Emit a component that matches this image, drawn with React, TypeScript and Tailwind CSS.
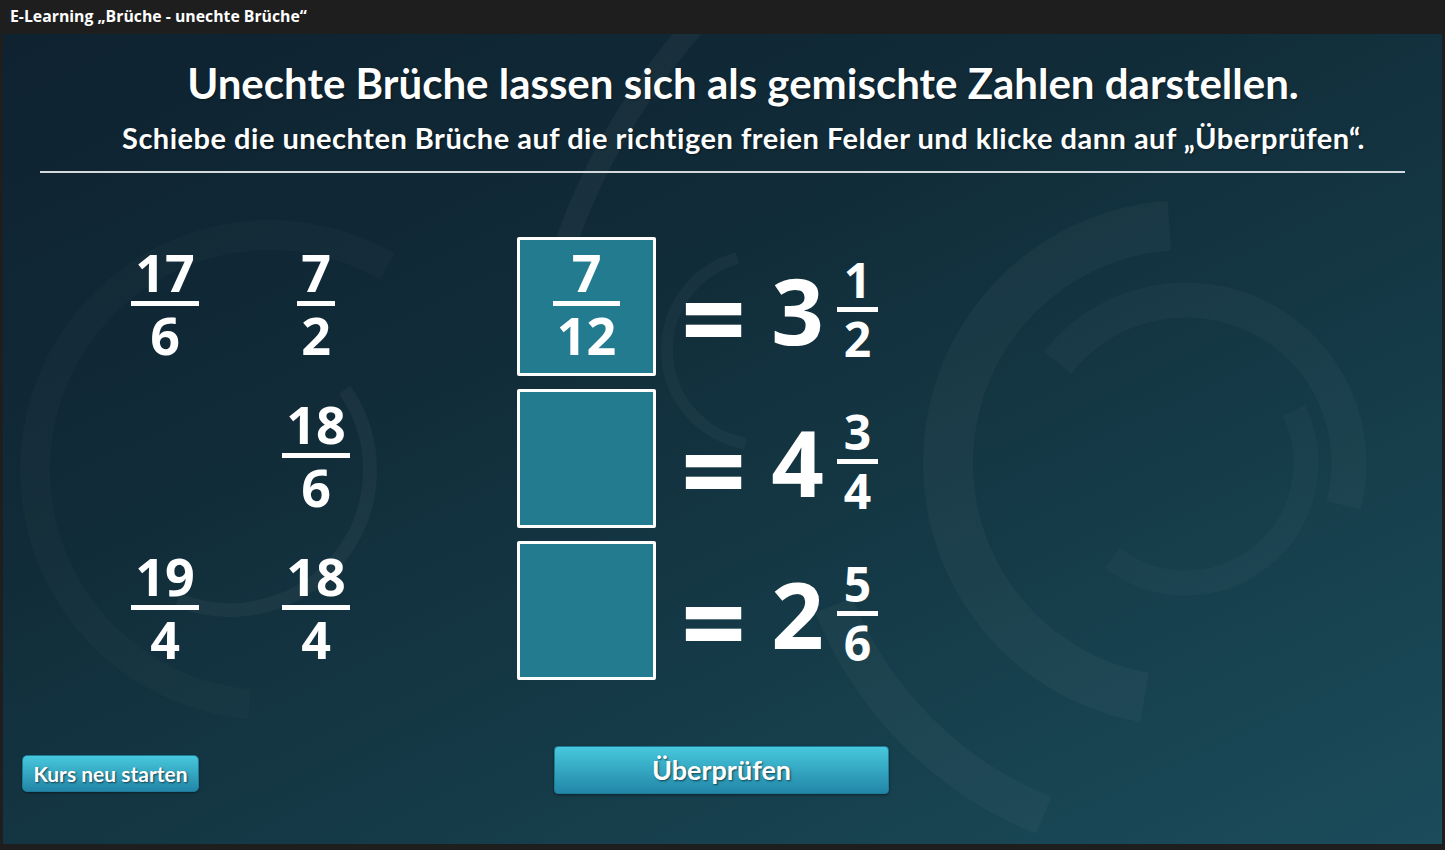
import React from "react";

// Dekorative Kreisbögen im Hintergrund
const arc = (cx: number, cy: number, r: number, a0: number, a1: number) => {
  const rad = (a: number) => (a * Math.PI) / 180;
  const x0 = cx + r * Math.cos(rad(a0));
  const y0 = cy + r * Math.sin(rad(a0));
  const x1 = cx + r * Math.cos(rad(a1));
  const y1 = cy + r * Math.sin(rad(a1));
  const large = a1 - a0 > 180 ? 1 : 0;
  return `M ${x0} ${y0} A ${r} ${r} 0 ${large} 1 ${x1} ${y1}`;
};

const bogen = [
  { cx: 1183, cy: 429, r: 238, w: 50, a0: 100, a1: 266, o: 0.032 },
  { cx: 1183, cy: 429, r: 163, w: 35, a0: 218, a1: 375, o: 0.028 },
  { cx: 1183, cy: 429, r: 120, w: 25, a0: -26, a1: 128, o: 0.025 },
  { cx: 1183, cy: 429, r: 658, w: 22, a0: 192, a1: 232, o: 0.04 },
  { cx: 1183, cy: 429, r: 380, w: 40, a0: 112, a1: 158, o: 0.03 },
  { cx: 267, cy: 436, r: 235, w: 30, a0: 95, a1: 300, o: 0.018 },
  { cx: 227, cy: 436, r: 140, w: 14, a0: -35, a1: 112, o: 0.04 },
  { cx: 759, cy: 316, r: 95, w: 12, a0: 100, a1: 255, o: 0.03 },
];

const Hintergrund = () => (
  <svg className="absolute inset-0" width="1439" height="810" viewBox="0 0 1439 810">
    {bogen.map((b, i) => (
      <path
        key={i}
        d={arc(b.cx, b.cy, b.r, b.a0, b.a1)}
        fill="none"
        stroke="#ffffff"
        strokeOpacity={b.o}
        strokeWidth={b.w}
      />
    ))}
  </svg>
);

const Bruch = ({ z, n }: { z: string; n: string }) => (
  <div className="mb-[7px] inline-flex flex-col items-stretch font-['Open_Sans',sans-serif] font-bold text-white text-[52px] leading-[54px]">
    <span className="px-[4px] text-center">{z}</span>
    <span className="my-[2px] h-[5px] bg-white" />
    <span className="px-[4px] text-center">{n}</span>
  </div>
);

const KleinBruch = ({ z, n }: { z: string; n: string }) => (
  <div className="inline-flex flex-col items-stretch font-['Open_Sans',sans-serif] font-bold text-white text-[48px] leading-[50px]">
    <span className="px-[7px] text-center">{z}</span>
    <span className="my-[2px] h-[5px] bg-white" />
    <span className="px-[7px] text-center">{n}</span>
  </div>
);

const links = [
  { z: "17", n: "6", pos: "col-start-1 row-start-1" },
  { z: "7", n: "2", pos: "col-start-2 row-start-1" },
  { z: "18", n: "6", pos: "col-start-2 row-start-2" },
  { z: "19", n: "4", pos: "col-start-1 row-start-3" },
  { z: "18", n: "4", pos: "col-start-2 row-start-3" },
];

const zeilen = [
  { ganz: "3", z: "1", n: "2", feld: { z: "7", n: "12" } },
  { ganz: "4", z: "3", n: "4", feld: null },
  { ganz: "2", z: "5", n: "6", feld: null },
];

const App = () => {
  return (
    <div className="w-[1445px] h-[850px] bg-[#1e1e1e] flex flex-col overflow-hidden">
      <div className="h-[34px] flex items-center pl-[10px] font-['Open_Sans',sans-serif] font-bold text-[15.8px] text-white">
        E-Learning „Brüche - unechte Brüche“
      </div>

      <div className="relative mx-[3px] h-[810px] overflow-hidden bg-[linear-gradient(155deg,#0e2230_0%,#112b38_35%,#153a47_65%,#1b4c5b_100%)]">
        <Hintergrund />

        <div className="relative flex h-full flex-col">
          {/* Überschriften */}
          <h1 className="pt-[24px] pl-[41px] text-center font-['Lato',sans-serif] font-bold text-[42px] leading-[50px] text-white [text-shadow:1px_1px_2px_rgba(0,0,0,0.4)]">
            Unechte Brüche lassen sich als gemischte Zahlen darstellen.
          </h1>
          <p className="mt-[13px] pl-[42px] text-center font-['Lato',sans-serif] font-bold text-[29px] tracking-[0.5px] leading-[34px] text-white [text-shadow:1px_1px_2px_rgba(0,0,0,0.4)]">
            Schiebe die unechten Brüche auf die richtigen freien Felder und klicke dann auf „Überprüfen“.
          </p>
          <div className="mx-[37px] mt-[16px] h-[2px] bg-[#d3d9dc]" />

          {/* Aufgabe */}
          <div className="mt-[64px] flex">
            <div className="ml-[102px] grid grid-cols-[120px_120px] grid-rows-[139px_139px_139px] gap-x-[31px] gap-y-[13px]">
              {links.map((b, i) => (
                <div key={i} className={`${b.pos} flex items-center justify-center`}>
                  <Bruch z={b.z} n={b.n} />
                </div>
              ))}
            </div>

            <div className="ml-[141px] flex flex-col gap-[13px]">
              {zeilen.map((r, i) => (
                <div key={i} className="flex h-[139px] items-center">
                  <div className="flex h-[139px] w-[139px] items-center justify-center rounded-[2px] border-[3px] border-white bg-[#237b8f]">
                    {r.feld && <Bruch z={r.feld.z} n={r.feld.n} />}
                  </div>
                  <span className="ml-[25px] mt-[18px] font-['Open_Sans',sans-serif] font-bold text-[114px] leading-[100px] text-white">
                    =
                  </span>
                  <span className="ml-[25px] mt-[6px] font-['Open_Sans',sans-serif] font-bold text-[92px] leading-[100px] text-white">
                    {r.ganz}
                  </span>
                  <div className="ml-[13px] mt-[6px]">
                    <KleinBruch z={r.z} n={r.n} />
                  </div>
                </div>
              ))}
            </div>
          </div>

          {/* Schaltflächen */}
          <div className="mt-[66px] flex items-start pl-[19px]">
            <button className="mt-[9px] h-[37px] w-[177px] rounded-[5px] border border-[#1f7c99] bg-[linear-gradient(#47c8dc,#2286a8)] font-['Lato',sans-serif] font-bold text-[21px] text-white shadow-[0_1px_2px_rgba(0,0,0,0.4)] [text-shadow:1px_1px_2px_rgba(0,0,0,0.6)]">
              Kurs neu starten
            </button>
            <button className="ml-[355px] h-[48px] w-[335px] rounded-[4px] border border-[#1f7c99] bg-[linear-gradient(#47c8dc,#2286a8)] font-['Lato',sans-serif] font-bold text-[27px] text-white shadow-[0_1px_3px_rgba(0,0,0,0.45)] [text-shadow:1px_1px_2px_rgba(0,0,0,0.6)]">
              Überprüfen
            </button>
          </div>
        </div>
      </div>
    </div>
  );
};

export default App;
